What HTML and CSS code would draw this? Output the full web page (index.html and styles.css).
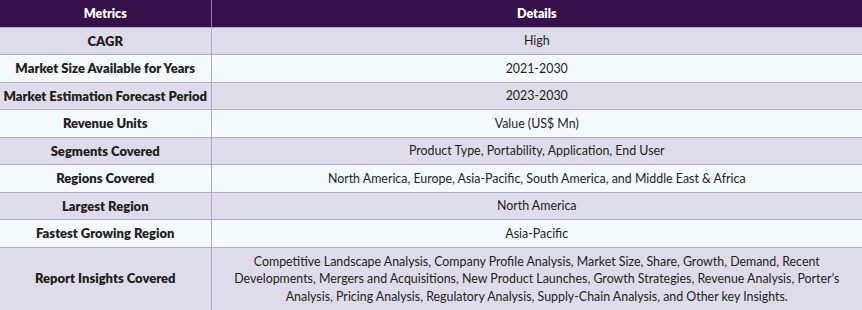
FILE: index.html
```html
<!DOCTYPE html>
<html lang="en">
<head>
    <meta charset="UTF-8">
    <meta name="viewport" content="width=device-width, initial-scale=1.0">
    <title>Report Scope</title>
    <link rel="stylesheet" href="styles.css">
</head>
<body>
    <table class="scope-table">
        <thead>
            <tr>
                <th class="col-metric">Metrics</th>
                <th>Details</th>
            </tr>
        </thead>
        <tbody>
            <tr>
                <td class="metric">CAGR</td>
                <td>High</td>
            </tr>
            <tr>
                <td class="metric">Market Size Available for Years</td>
                <td>2021-2030</td>
            </tr>
            <tr>
                <td class="metric">Market Estimation Forecast Period</td>
                <td>2023-2030</td>
            </tr>
            <tr>
                <td class="metric">Revenue Units</td>
                <td>Value (US$ Mn)</td>
            </tr>
            <tr>
                <td class="metric">Segments Covered</td>
                <td>Product Type, Portability, Application, End User</td>
            </tr>
            <tr>
                <td class="metric">Regions Covered</td>
                <td>North America, Europe, Asia-Pacific, South America, and Middle East &amp; Africa</td>
            </tr>
            <tr>
                <td class="metric">Largest Region</td>
                <td>North America</td>
            </tr>
            <tr>
                <td class="metric">Fastest Growing Region</td>
                <td>Asia-Pacific</td>
            </tr>
            <tr class="tall">
                <td class="metric">Report Insights Covered</td>
                <td>Competitive Landscape Analysis, Company Profile Analysis, Market Size, Share, Growth, Demand, Recent Developments, Mergers and Acquisitions, New Product Launches, Growth Strategies, Revenue Analysis, Porter’s Analysis, Pricing Analysis, Regulatory Analysis, Supply-Chain Analysis, and Other key Insights.</td>
            </tr>
        </tbody>
    </table>
</body>
</html>
```

FILE: styles.css
```css
* {
    box-sizing: border-box;
}

html, body {
    margin: 0;
    padding: 0;
    background: #ffffff;
    font-family: 'Lato', 'Open Sans', sans-serif;
}

/* TABLE */
.scope-table {
    width: 862px;
    border-collapse: collapse;
    table-layout: fixed;
    color: #231f20;
    font-size: 12.4px;
}

.scope-table th,
.scope-table td {
    border-right: 1px solid #b3a8ca;
    border-bottom: 1px solid #b3a8ca;
    text-align: center;
    vertical-align: middle;
    padding: 0 16px;
    height: 27.5px;
}

.scope-table th:last-child,
.scope-table td:last-child {
    border-right: none;
}

.col-metric {
    width: 211px;
}

.scope-table th {
    background-color: #36124b;
    color: #ffffff;
    font-weight: 800;
    font-size: 12.5px;
    border-right-color: #8e7fa3;
    height: 27px;
}

.scope-table tbody tr:nth-child(odd) {
    background-color: #dfdce9;
}

.scope-table tbody tr:nth-child(even) {
    background-color: #f4f9fc;
}

.metric {
    font-weight: 800;
    font-size: 13px;
    white-space: nowrap;
}

.scope-table th.col-metric,
.scope-table td.metric {
    padding: 0 2px;
}

.tall td {
    height: 63px;
    line-height: 17.5px;
    padding-top: 4px;
    padding-bottom: 4px;
    border-bottom: none;
}
```
